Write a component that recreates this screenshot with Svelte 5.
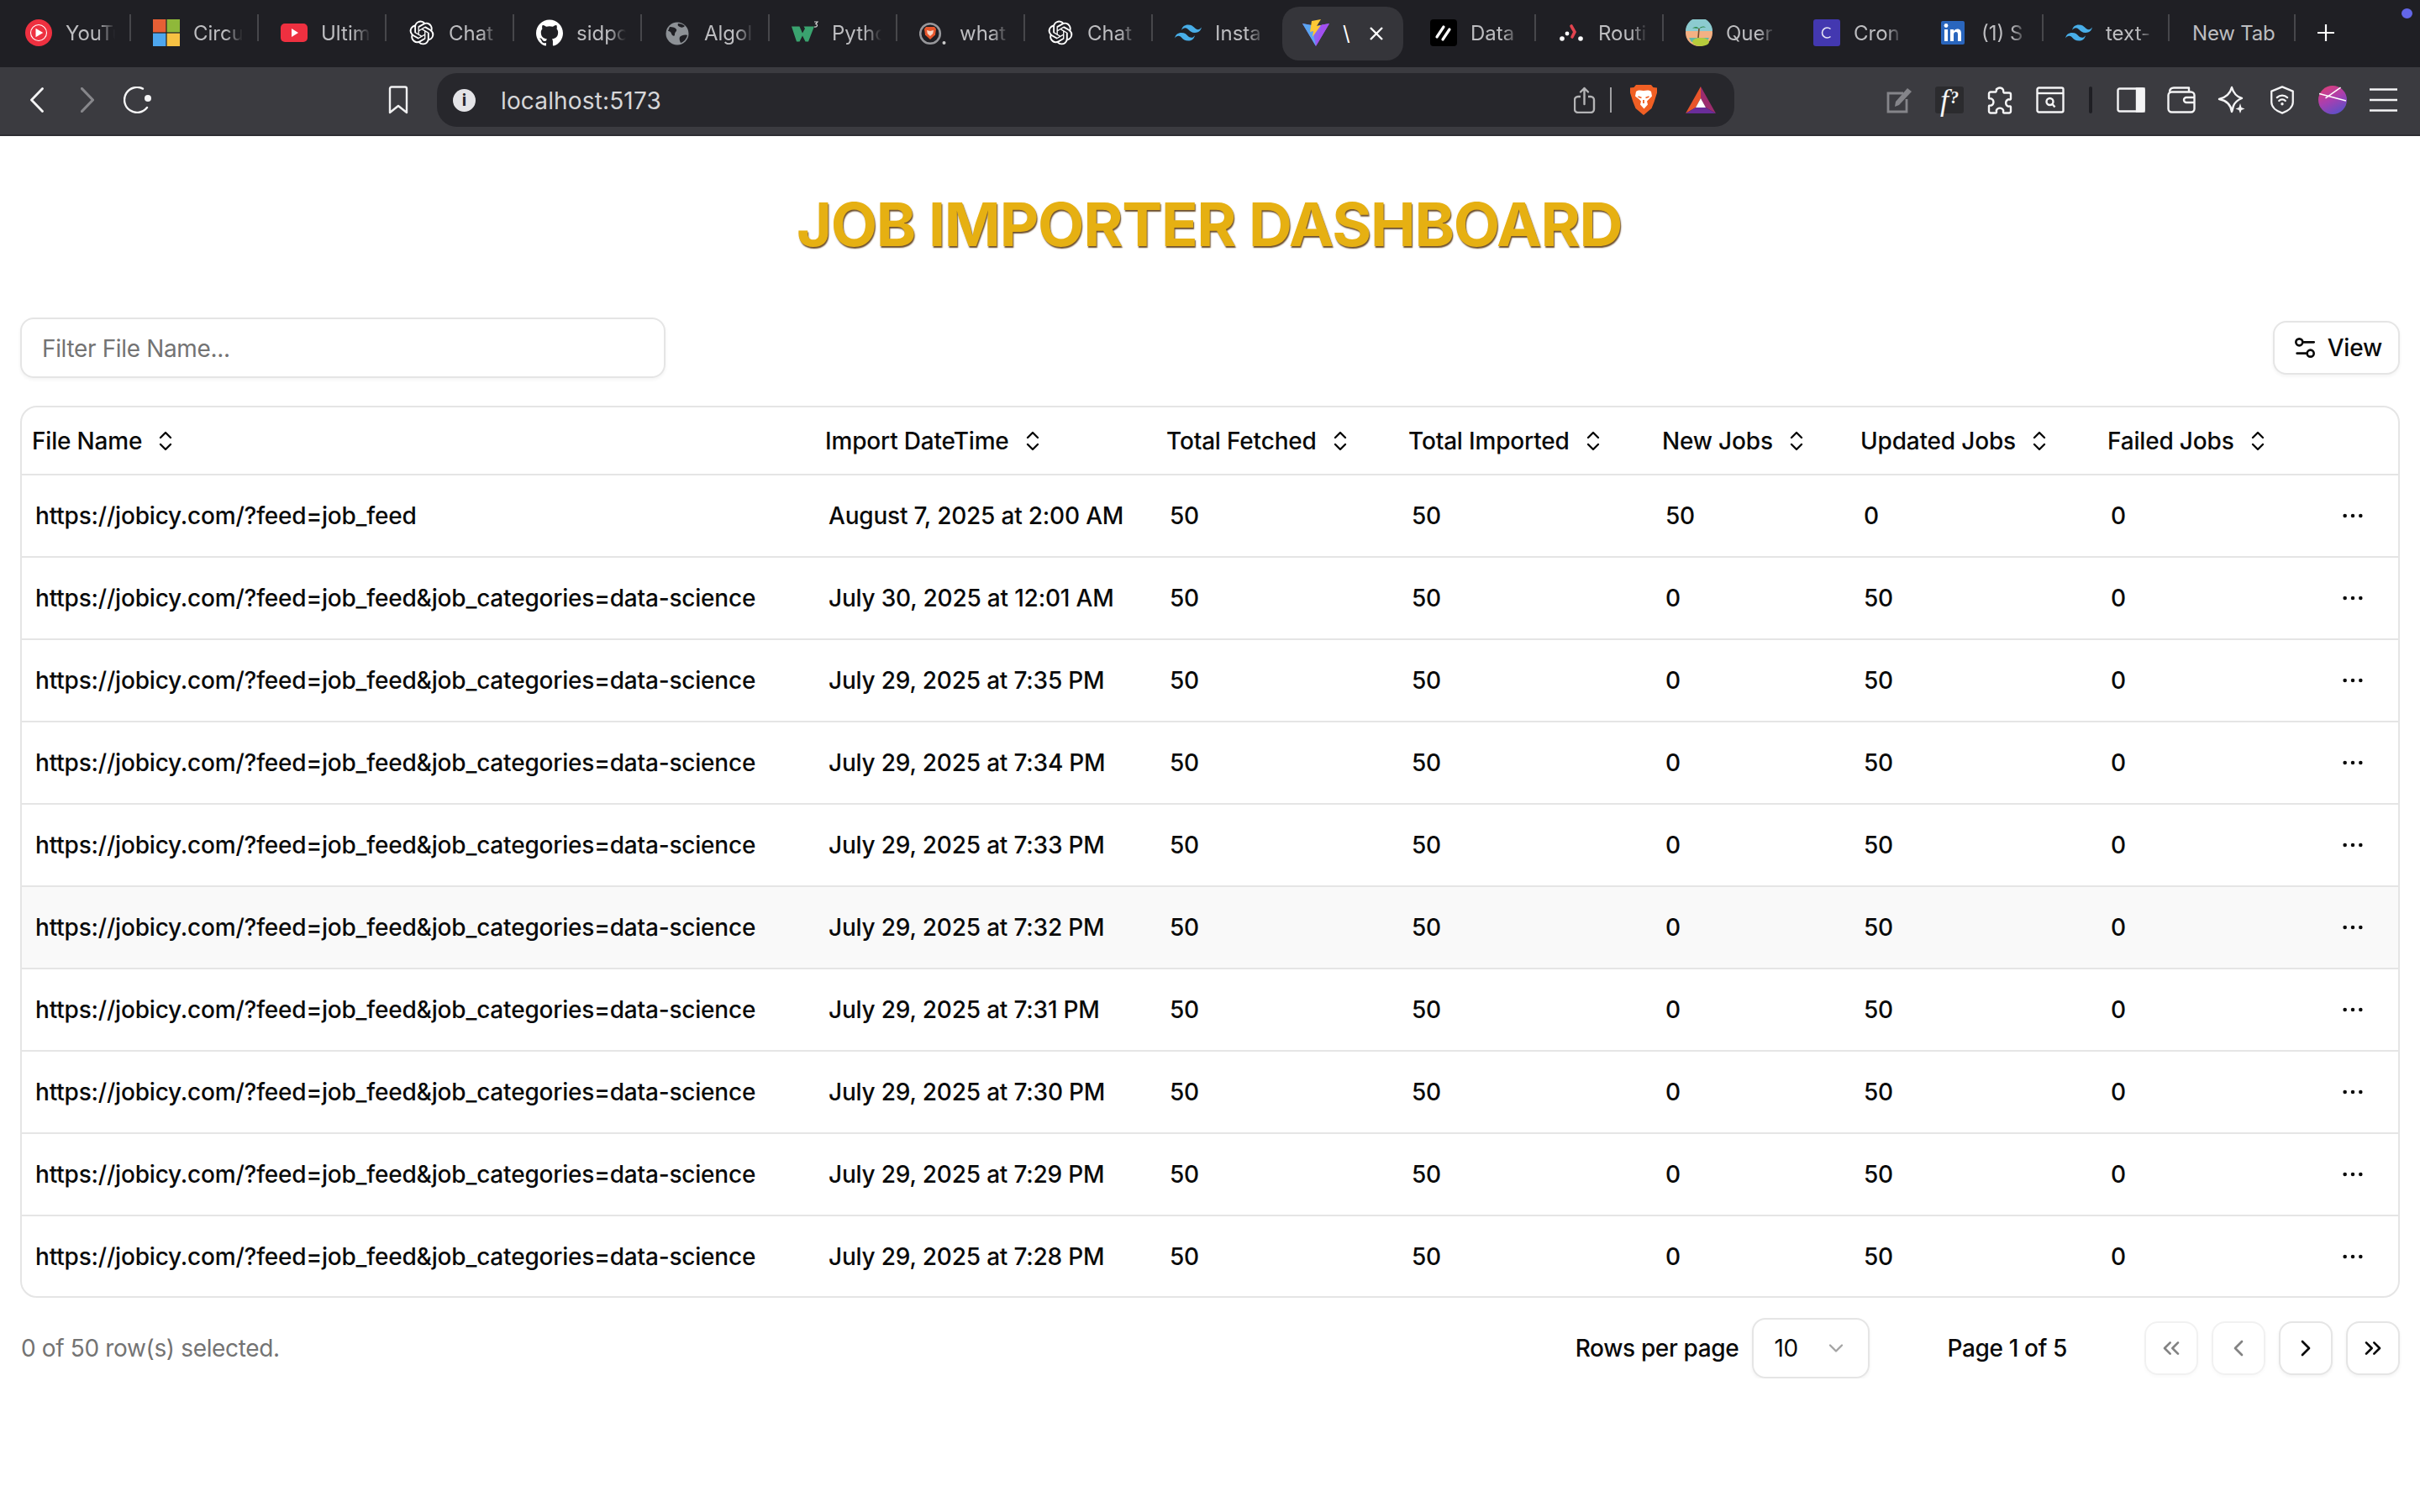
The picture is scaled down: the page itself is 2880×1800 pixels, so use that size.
<script>
  const tabs = [
    { icon: "ytm", label: "YouTu" },
    { icon: "ms", label: "Circu" },
    { icon: "yt", label: "Ultim" },
    { icon: "gpt", label: "Chat" },
    { icon: "gh", label: "sidpc" },
    { icon: "globe", label: "Algol" },
    { icon: "w3", label: "Pytho" },
    { icon: "brave", label: "what" },
    { icon: "gpt", label: "Chat" },
    { icon: "tw", label: "Insta", nosep: true },
    { icon: "vite", label: "\\", active: true },
    { icon: "data", label: "Data" },
    { icon: "route", label: "Routi" },
    { icon: "palm", label: "Quer", nosep: true },
    { icon: "cron", label: "Cron", nosep: true },
    { icon: "in", label: "(1) S", slim: true },
    { icon: "tw", label: "text-", mid: true },
    { icon: "", label: "New Tab", plain: true, mid: true }
  ];

  const columns = ["File Name", "Import DateTime", "Total Fetched", "Total Imported", "New Jobs", "Updated Jobs", "Failed Jobs"];

  const feed = "https://jobicy.com/?feed=job_feed&job_categories=data-science";
  const times = ["July 30, 2025 at 12:01 AM", "July 29, 2025 at 7:35 PM", "July 29, 2025 at 7:34 PM", "July 29, 2025 at 7:33 PM", "July 29, 2025 at 7:32 PM", "July 29, 2025 at 7:31 PM", "July 29, 2025 at 7:30 PM", "July 29, 2025 at 7:29 PM", "July 29, 2025 at 7:28 PM"];

  const rows = [
    { file: "https://jobicy.com/?feed=job_feed", date: "August 7, 2025 at 2:00 AM", fetched: 50, imported: 50, added: 50, updated: 0, failed: 0 },
    ...times.map((date) => ({ file: feed, date, fetched: 50, imported: 50, added: 0, updated: 50, failed: 0 }))
  ];

  const gpt = "M22.2819 9.8211a5.9847 5.9847 0 0 0-.5157-4.9108 6.0462 6.0462 0 0 0-6.5098-2.9A6.0651 6.0651 0 0 0 4.9807 4.1818a5.9847 5.9847 0 0 0-3.9977 2.9 6.0462 6.0462 0 0 0 .7427 7.0966 5.98 5.98 0 0 0 .511 4.9107 6.051 6.051 0 0 0 6.5146 2.9001A5.9847 5.9847 0 0 0 13.2599 24a6.0557 6.0557 0 0 0 5.7718-4.2058 5.9894 5.9894 0 0 0 3.9977-2.9001 6.0557 6.0557 0 0 0-.7475-7.0729zm-9.022 12.6081a4.4755 4.4755 0 0 1-2.8764-1.0408l.1419-.0804 4.7783-2.7582a.7948.7948 0 0 0 .3927-.6813v-6.7369l2.02 1.1686a.071.071 0 0 1 .038.052v5.5826a4.504 4.504 0 0 1-4.4945 4.4944zm-9.6607-4.1254a4.4708 4.4708 0 0 1-.5346-3.0137l.142.0852 4.783 2.7582a.7712.7712 0 0 0 .7806 0l5.8428-3.3685v2.3324a.0804.0804 0 0 1-.0332.0615L9.74 19.9502a4.4992 4.4992 0 0 1-6.1408-1.6464zM2.3408 7.8956a4.485 4.485 0 0 1 2.3655-1.9728V11.6a.7664.7664 0 0 0 .3879.6765l5.8144 3.3543-2.0201 1.1685a.0757.0757 0 0 1-.071 0l-4.8303-2.7865A4.504 4.504 0 0 1 2.3408 7.872zm16.5963 3.8558L13.1038 8.364 15.1192 7.2a.0757.0757 0 0 1 .071 0l4.8303 2.7913a4.4944 4.4944 0 0 1-.6765 8.1042v-5.6772a.79.79 0 0 0-.407-.667zm2.0107-3.0231l-.142-.0852-4.7735-2.7818a.7759.7759 0 0 0-.7854 0L9.409 9.2297V6.8974a.0662.0662 0 0 1 .0284-.0615l4.8303-2.7866a4.4992 4.4992 0 0 1 6.6802 4.66zM8.3065 12.863l-2.02-1.1638a.0804.0804 0 0 1-.038-.0567V6.0742a4.4992 4.4992 0 0 1 7.3757-3.4537l-.142.0805L8.704 5.459a.7948.7948 0 0 0-.3927.6813zm1.0976-2.3654l2.602-1.4998 2.6069 1.4998v2.9994l-2.5974 1.4997-2.6067-1.4997Z";
  const github = "M12 .297c-6.63 0-12 5.373-12 12 0 5.303 3.438 9.8 8.205 11.385.6.113.82-.258.82-.577 0-.285-.01-1.04-.015-2.04-3.338.724-4.042-1.61-4.042-1.61C4.422 18.07 3.633 17.7 3.633 17.7c-1.087-.744.084-.729.084-.729 1.205.084 1.838 1.236 1.838 1.236 1.07 1.835 2.809 1.305 3.495.998.108-.776.417-1.305.76-1.605-2.665-.3-5.466-1.332-5.466-5.93 0-1.31.465-2.38 1.235-3.22-.135-.303-.54-1.523.105-3.176 0 0 1.005-.322 3.3 1.23.96-.267 1.98-.399 3-.405 1.02.006 2.04.138 3 .405 2.28-1.552 3.285-1.23 3.285-1.23.645 1.653.24 2.873.12 3.176.765.84 1.23 1.91 1.23 3.22 0 4.61-2.805 5.625-5.475 5.92.42.36.81 1.096.81 2.22 0 1.606-.015 2.896-.015 3.286 0 .315.21.69.825.57C20.565 22.092 24 17.592 24 12.297c0-6.627-5.373-12-12-12";
  const tailwind = "M12 4.8c-3.2 0-5.2 1.6-6 4.8 1.2-1.6 2.6-2.2 4.2-1.8.91.23 1.57.89 2.29 1.62C13.67 10.62 15.03 12 18 12c3.2 0 5.2-1.6 6-4.8-1.2 1.6-2.6 2.2-4.2 1.8-.91-.23-1.57-.89-2.29-1.62C16.34 6.18 14.98 4.8 12 4.8zM6 12c-3.2 0-5.2 1.6-6 4.8 1.2-1.6 2.6-2.2 4.2-1.8.91.23 1.57.89 2.29 1.62 1.18 1.19 2.54 2.58 5.51 2.58 3.2 0 5.2-1.6 6-4.8-1.2 1.6-2.6 2.2-4.2 1.8-.91-.23-1.57-.89-2.29-1.62C10.34 13.38 8.98 12 6 12z";
</script>

{#snippet favicon(name)}
  <svg class="favicon" viewBox="0 0 32 32" aria-hidden="true">
    {#if name === "ytm"}
      <circle cx="16" cy="16" r="16" fill="#ee3040" />
      <circle cx="16" cy="16" r="9.5" fill="none" stroke="#fff" stroke-width="1.1" />
      <path d="M12.5 10.8v10.4l8.8-5.2z" fill="#fff" />
    {:else if name === "ms"}
      <rect x="0" y="0" width="15.4" height="15.4" fill="#e65f35" />
      <rect x="16.6" y="0" width="15.4" height="15.4" fill="#8fb83a" />
      <rect x="0" y="16.6" width="15.4" height="15.4" fill="#4da6ee" />
      <rect x="16.6" y="16.6" width="15.4" height="15.4" fill="#f6c143" />
    {:else if name === "yt"}
      <rect x="0" y="5" width="32" height="22" rx="5" fill="#ee3040" />
      <path d="M13 11v10l8-5z" fill="#fff" />
    {:else if name === "gpt"}
      <path d={gpt} transform="scale(1.2) translate(1.3 1.3)" fill="#fff" />
    {:else if name === "gh"}
      <path d={github} transform="scale(1.333)" fill="#fff" />
    {:else if name === "globe"}
      <circle cx="16" cy="17" r="13.5" fill="#8d9196" />
      <path d="M7 9c4 0 7 1 8 3s-2 3-2 6-3 2-4-1-3-3-4-3zM19 21c2-2 6-3 9-2-1 4-4 8-8 9-1-2-2-5-1-7zM17 5c3 0 6 1 8 3-2 2-4 2-6 1s-3-2-2-4z" fill="#1f1f24" />
    {:else if name === "w3"}
      <path d="M0 8.5h9.5l3.5 8 3-5.5-1.500-2.500H27l-7 18h-3.500L13 19.500 9.500 26.500H6z" fill="#3aa36f" />
      <path d="M27 3h4l-2.200 2.500c2.500.3 2.500 4-1.800 3.500" fill="none" stroke="#d5d5d5" stroke-width="1.2" />
    {:else if name === "brave"}
      <circle cx="13" cy="17" r="11.800" fill="none" stroke="#97979b" stroke-width="2.6" />
      <path d="M8 9h10l2 2.500-1 7-6 5.500-6-5.500-1-7z" fill="#e7562c" />
      <path d="M9 13l4 1 4-1-.8 4-3.200 3-3.200-3z" fill="#f9d8c8" />
      <circle cx="29.5" cy="28" r="2" fill="#ccc" />
    {:else if name === "tw"}
      <path d={tailwind} transform="scale(1.333)" fill="#48aee8" />
    {:else if name === "vite"}
      <path d="M0 5l16 3 16-3-16 27z" fill="#8f62f2" />
      <path d="M0 5l11 2 5 25z" fill="#5aa6f2" />
      <path d="M16 32l16-27-9 1.600z" fill="#a24ff0" />
      <path d="M22 0l-11 2-2 13 4-1-1 7 10-14-5 1z" fill="#fdc835" />
    {:else if name === "data"}
      <rect width="32" height="32" rx="4" fill="#000" />
      <path d="M8 21L16 9M15 24l8-12" stroke="#fff" stroke-width="3.2" stroke-linecap="round" />
    {:else if name === "route"}
      <path d="M16 8l4 7-3 6" fill="none" stroke="#e2434e" stroke-width="3.6" stroke-linecap="round" />
      <circle cx="5" cy="23" r="2.8" fill="#fff" />
      <circle cx="27" cy="23" r="2.8" fill="#fff" />
      <circle cx="11" cy="17" r="2.4" fill="#fff" />
    {:else if name === "palm"}
      <ellipse cx="16" cy="16" rx="16" ry="16" fill="#f4b183" />
      <path d="M0 14a16 16 0 0 1 32 0z" fill="#8ccbd0" />
      <path d="M4 22h24l-3 5H7z" fill="#5fb8a6" />
      <ellipse cx="18" cy="27" rx="10" ry="5" fill="#b6cc3c" />
      <path d="M15 22l1-11" stroke="#6f4a2a" stroke-width="1.6" />
      <path d="M16 11c-3-3-6-2-8 0 3-1 5 0 8 0 3-3 6-3 8-1-3-1-5 0-8 1z" fill="#2f8a4a" />
    {:else if name === "cron"}
      <rect width="32" height="32" rx="3" fill="#4338b0" />
      <path d="M20.5 11.5a6 6 0 1 0 0 9" fill="none" stroke="#e6e6f5" stroke-width="1.6" />
    {:else if name === "in"}
      <rect x="0" y="2" width="28" height="28" rx="2" fill="#2a66bd" />
      <rect x="4" y="12" width="4" height="14" fill="#fff" />
      <circle cx="6" cy="7.5" r="2.4" fill="#fff" />
      <path d="M11 12h4v2c1-1.500 2.500-2.400 4.400-2.400 3.400 0 4.600 2.200 4.600 5.400v9h-4v-8c0-2-.6-3-2.200-3s-2.800 1.200-2.800 3v8h-4z" fill="#fff" />
    {/if}
  </svg>
{/snippet}

{#snippet sortIcon()}
  <svg class="sort" viewBox="0 0 16 24" fill="none" stroke="currentColor" stroke-width="2.4" stroke-linecap="round" stroke-linejoin="round" aria-hidden="true">
    <path d="M2 8l6-6 6 6" />
    <path d="M2 16l6 6 6-6" />
  </svg>
{/snippet}

<div class="chrome">
  <div class="tabstrip">
    {#each tabs as tab}
      <div class="tab" class:active={tab.active} class:plain={tab.plain} class:nosep={tab.nosep} class:slim={tab.slim} class:mid={tab.mid}>
        {#if tab.icon}{@render favicon(tab.icon)}{/if}
        <span class="tab-title" class:short={tab.active}>{tab.label}</span>
        {#if tab.active}
          <svg class="tab-close" viewBox="0 0 16 16" fill="none" stroke="#fff" stroke-width="2.4" aria-hidden="true"><path d="M1 1l14 14M15 1L1 15" /></svg>
        {/if}
      </div>
    {/each}
    <svg class="new-tab" viewBox="0 0 20 20" stroke="#fff" stroke-width="2.2" aria-hidden="true"><path d="M10 0v20M0 10h20" /></svg>
    <span class="profile-dot"></span>
  </div>

  <div class="toolbar">
    <div class="nav">
      <svg class="ic back" viewBox="0 0 16 30" fill="none" stroke="#f4f4f5" stroke-width="2.8" stroke-linecap="round" stroke-linejoin="round"><path d="M14.5 1.5L1.5 15l13 13.500" /></svg>
      <svg class="ic forward" viewBox="0 0 16 30" fill="none" stroke="#87878b" stroke-width="3.2" stroke-linecap="round" stroke-linejoin="round"><path d="M1.5 1.5L14.5 15l-13 13.500" /></svg>
      <svg class="ic reload" viewBox="0 0 34 32" fill="none" stroke="#f4f4f5" stroke-width="2.4" stroke-linecap="round"><path d="M23 2.600A15 15 0 1 0 28 25" /><circle cx="29" cy="14" r="4" fill="#f4f4f5" stroke="none" /></svg>
    </div>
    <svg class="ic bookmark" viewBox="0 0 24 34" fill="none" stroke="#f0f0f1" stroke-width="2.4" stroke-linejoin="round"><path d="M2 3.500a2 2 0 0 1 2-2h16a2 2 0 0 1 2 2V32l-10-8-10 8z" /></svg>
    <div class="address">
      <span class="info">i</span>
      <span class="url">localhost:5173</span>
      <div class="address-end">
        <svg class="ic share" viewBox="0 0 26 32" fill="none" stroke="#b4b4b6" stroke-width="2.4" stroke-linejoin="round"><path d="M8 12H5a4 4 0 0 0-4 4v11a4 4 0 0 0 4 4h15a4 4 0 0 0 4-4V16a4 4 0 0 0-4-4h-3" /><path d="M12.5 21V2M8 6.500L12.500 2 17 6.500" stroke-linecap="round" /></svg>
        <span class="address-sep"></span>
        <svg class="ic lion" viewBox="0 0 32 36"><path d="M7 0h18l2.500 3 4.500.5v6l-3.500 11-3 7.500-9.500 8-9.500-8-3-7.500L0 9.500v-6L4.500 3z" fill="#f05f24" /><path d="M7 8c3-2.500 6-1.500 9-1 3-.5 6-1.500 9 1l1 5.500-3.500 3.500-2.500 2.500 1 4-4.500 5-4.500-5 1-4-2.500-2.500L6 13.500z" fill="#fff" /><path d="M9.500 14l4 1.500M22.500 14l-4 1.500M16 18v4" stroke="#f05f24" stroke-width="1.8" /></svg>
        <svg class="ic bat" viewBox="0 0 36 32"><path d="M18 0L0 32l12-7 6-11z" fill="#e9552b" /><path d="M18 0l18 32-12-7-6-11z" fill="#9c2c6e" /><path d="M0 32l12-7h12l12 7z" fill="#6a2d9a" /><path d="M18 14l-6 11h12z" fill="#fff" /></svg>
      </div>
    </div>
    <div class="extensions">
      <svg class="ic ext" viewBox="0 0 34 34" fill="none" stroke="#85858a" stroke-width="2.8"><path d="M22 9H4v22h22V16" /><path d="M12 25l1-6L27 3l5 4-15 16z" fill="#85858a" stroke="none" /></svg>
      <div class="fx"><em>f</em><b>?</b></div>
      <svg class="ic ext" viewBox="0 0 34 34" fill="none" stroke="#f4f4f5" stroke-width="2.4" stroke-linejoin="round"><path d="M13 5a4.500 4.500 0 0 1 8 0c.5 1.500-.5 3 1 3.500h6a2 2 0 0 1 2 2v5c0 1.500-1.500 1-3 .8a4.500 4.500 0 0 0 0 8.400c1.500-.2 3-.7 3 .8v5a2 2 0 0 1-2 2h-6c-1.500 0-1-1.500-.8-3a4.500 4.500 0 0 0-8.400 0c.2 1.500.7 3-.8 3H6a2 2 0 0 1-2-2v-6c0-1.500 1.500-.5 3-1a4.500 4.500 0 0 0 0-8c-1.500-.5-3 .5-3-1v-5a2 2 0 0 1 2-2h6c1.500-.5.500-2 1-3.500z" /></svg>
      <svg class="ic ext" viewBox="0 0 34 32" fill="none" stroke="#f4f4f5" stroke-width="2.4"><rect x="1.5" y="1.5" width="31" height="29" rx="2" /><path d="M1.5 8h31" /><circle cx="16.5" cy="18" r="4" /><path d="M19.5 21l3 3.500" /></svg>
      <span class="tool-sep"></span>
      <svg class="ic ext" viewBox="0 0 34 30" fill="none" stroke="#f4f4f5" stroke-width="2.4"><rect x="1.5" y="1.5" width="31" height="27" rx="2" /><rect x="24" y="1.5" width="8.5" height="27" fill="#f4f4f5" /></svg>
      <svg class="ic ext" viewBox="0 0 34 32" fill="none" stroke="#f4f4f5" stroke-width="2.4" stroke-linejoin="round"><path d="M3 6.500C3 3 5 1.500 8 1.500h18v5" /><rect x="1.5" y="6.5" width="31" height="24" rx="4" /><path d="M32 13h-9a3 3 0 0 0-3 3v0a3 3 0 0 0 3 3h9" /></svg>
      <svg class="ic ext" viewBox="0 0 34 34" fill="none" stroke="#f4f4f5" stroke-width="2.4" stroke-linejoin="round"><path d="M17 2c2 7 5 11 12 13-5 2-8 4-10 9-1 3-1 5-2 7-1-8-5-13-15-15 8-2 13-6 15-14z" /><path d="M27 21l1.500 5 4 1.500-4 1.500-1.500 4-1.500-4-4-1.500 4-1.500z" fill="#f4f4f5" stroke="none" /></svg>
      <svg class="ic ext" viewBox="0 0 30 36" fill="none" stroke="#f4f4f5" stroke-width="2.4" stroke-linejoin="round"><path d="M15 1.500L28.500 7v14c0 6-6 11-13.500 13.500C7.500 32 1.500 27 1.500 21V7z" /><path d="M8.500 15a9.500 9.500 0 0 1 13 0M11 19a5.500 5.500 0 0 1 8 0" stroke-linecap="round" /><circle cx="15" cy="23" r="1.8" fill="#f4f4f5" stroke="none" /></svg>
      <svg class="ic ext" viewBox="0 0 32 32"><defs><linearGradient id="orb" x1="0.2" y1="0" x2="0.7" y2="1"><stop offset="0" stop-color="#dd3f78" /><stop offset="0.5" stop-color="#a83fb0" /><stop offset="1" stop-color="#5a50c8" /></linearGradient></defs><circle cx="16" cy="16" r="16" fill="url(#orb)" /><path d="M1 9l30 8M8 14L25 2" stroke="#fff" stroke-width="1.4" /></svg>
      <svg class="ic ext" viewBox="0 0 34 28" stroke="#f4f4f5" stroke-width="2.6"><path d="M1 1.500h33M1 14h33M1 26.500h33" /></svg>
    </div>
  </div>
</div>

<main class="page">
  <h1 class="title">JOB IMPORTER DASHBOARD</h1>

  <div class="controls">
    <div class="filter">Filter File Name...</div>
    <button class="view-btn">
      <svg class="lucide" viewBox="0 0 24 24" fill="none" stroke="currentColor" stroke-width="2" stroke-linecap="round" stroke-linejoin="round"><path d="M20 7h-9" /><path d="M14 17H5" /><circle cx="17" cy="17" r="3" /><circle cx="7" cy="7" r="3" /></svg>
      View
    </button>
  </div>

  <div class="table-wrap">
    <table>
      <colgroup>
        <col class="c-file" /><col class="c-date" /><col class="c-fetched" /><col class="c-imported" /><col class="c-new" /><col class="c-updated" /><col class="c-failed" /><col />
      </colgroup>
      <thead>
        <tr>
          {#each columns as col}
            <th><span class="th-inner">{col}{@render sortIcon()}</span></th>
          {/each}
          <th></th>
        </tr>
      </thead>
      <tbody>
        {#each rows as row, i}
          <tr class:hover={i === 5}>
            <td>{row.file}</td>
            <td>{row.date}</td>
            <td>{row.fetched}</td>
            <td>{row.imported}</td>
            <td>{row.added}</td>
            <td>{row.updated}</td>
            <td>{row.failed}</td>
            <td class="actions">
              <svg class="lucide" viewBox="0 0 24 24" fill="currentColor"><circle cx="12" cy="12" r="1.7" /><circle cx="19" cy="12" r="1.7" /><circle cx="5" cy="12" r="1.7" /></svg>
            </td>
          </tr>
        {/each}
      </tbody>
    </table>
  </div>

  <div class="footer">
    <span class="selected">0 of 50 row(s) selected.</span>
    <div class="pager">
      <span class="rows-label">Rows per page</span>
      <div class="select">
        10
        <svg class="chev" viewBox="0 0 24 24" fill="none" stroke="#a3a3a3" stroke-width="2" stroke-linecap="round" stroke-linejoin="round"><path d="M6 9l6 6 6-6" /></svg>
      </div>
      <span class="page-label">Page 1 of 5</span>
      <div class="page-btns">
        <button class="page-btn" disabled><svg class="chev" viewBox="0 0 24 24" fill="none" stroke="currentColor" stroke-width="2" stroke-linecap="round" stroke-linejoin="round"><path d="M11 17l-5-5 5-5" /><path d="M18 17l-5-5 5-5" /></svg></button>
        <button class="page-btn" disabled><svg class="chev" viewBox="0 0 24 24" fill="none" stroke="currentColor" stroke-width="2" stroke-linecap="round" stroke-linejoin="round"><path d="M15 18l-6-6 6-6" /></svg></button>
        <button class="page-btn"><svg class="chev" viewBox="0 0 24 24" fill="none" stroke="currentColor" stroke-width="2" stroke-linecap="round" stroke-linejoin="round"><path d="M9 18l6-6-6-6" /></svg></button>
        <button class="page-btn"><svg class="chev" viewBox="0 0 24 24" fill="none" stroke="currentColor" stroke-width="2" stroke-linecap="round" stroke-linejoin="round"><path d="M6 17l5-5-5-5" /><path d="M13 17l5-5-5-5" /></svg></button>
      </div>
    </div>
  </div>
</main>

<style>
  :global(body) {
    margin: 0;
    background: #fff;
    font-family: Inter, "Liberation Sans", sans-serif;
    color: #0a0a0a;
  }

  /* BROWSER CHROME */
  .chrome {
    height: 162px;
    display: flex;
    flex-direction: column;
  }
  .tabstrip {
    height: 80px;
    background: #1f1f24;
    display: flex;
    align-items: center;
    padding-left: 3px;
    position: relative;
  }
  .tab {
    width: 152px;
    height: 64px;
    box-sizing: border-box;
    padding-left: 27px;
    padding-right: 18px;
    display: flex;
    align-items: center;
    gap: 16px;
    position: relative;
    flex-shrink: 0;
  }
  .tab.slim {
    width: 148px;
  }
  .tab.mid {
    width: 150px;
  }
  .tab::after {
    content: "";
    position: absolute;
    right: -1px;
    top: 9px;
    width: 2px;
    height: 32px;
    background: #47474b;
  }
  .tab.nosep::after,
  .tab.active::after {
    display: none;
  }
  .tab.active {
    width: 144px;
    margin: 0 5px 0 3px;
    background: #35353a;
    border-radius: 20px;
    padding-left: 24px;
    padding-right: 24px;
  }
  .tab.plain {
    padding-left: 28px;
    padding-right: 0;
  }
  .favicon {
    width: 32px;
    height: 32px;
    flex-shrink: 0;
    margin-bottom: 2px;
  }
  .tab-title {
    font-size: 24px;
    color: #bdbdc0;
    white-space: nowrap;
    overflow: hidden;
    flex: 1;
    -webkit-mask-image: linear-gradient(to right, #000 65%, transparent 100%);
    mask-image: linear-gradient(to right, #000 65%, transparent 100%);
    margin-bottom: 2px;
  }
  .tab.plain .tab-title {
    letter-spacing: -0.2px;
    -webkit-mask-image: none;
    mask-image: none;
  }
  .tab-title.short {
    color: #fff;
    -webkit-mask-image: none;
    mask-image: none;
  }
  .tab-close {
    width: 16px;
    height: 16px;
    flex-shrink: 0;
  }
  .new-tab {
    width: 20px;
    height: 20px;
    margin-left: 27px;
    margin-bottom: 2px;
  }
  .profile-dot {
    position: absolute;
    right: 9px;
    top: 10px;
    width: 13px;
    height: 12px;
    border-radius: 50%;
    background: #6366e8;
  }

  .toolbar {
    height: 82px;
    box-sizing: border-box;
    background: #3b3b40;
    border-bottom: 2px solid #2e2e33;
    display: flex;
    align-items: center;
    padding: 0 27px 2px 36px;
  }
  .ic {
    display: block;
    flex-shrink: 0;
  }
  .nav {
    display: flex;
    align-items: center;
  }
  .back, .forward {
    width: 16px;
    height: 30px;
  }
  .forward {
    margin-left: 44px;
  }
  .reload {
    width: 34px;
    height: 32px;
    margin-left: 35px;
  }
  .bookmark {
    width: 24px;
    height: 34px;
    margin-left: 281px;
  }
  .address {
    width: 1544px;
    height: 64px;
    box-sizing: border-box;
    margin-left: 34px;
    padding: 0 22px 0 19px;
    border-radius: 24px;
    background: #27272c;
    display: flex;
    align-items: center;
  }
  .info {
    width: 27px;
    height: 27px;
    border-radius: 50%;
    background: #e4e4e8;
    color: #27272c;
    font-size: 20px;
    font-weight: 700;
    line-height: 27px;
    text-align: center;
  }
  .url {
    margin-left: 30px;
    padding-top: 1px;
    font-size: 28px;
    letter-spacing: 0.15px;
    color: #d6d6d8;
  }
  .address-end {
    margin-left: auto;
    display: flex;
    align-items: center;
  }
  .share {
    width: 26px;
    height: 32px;
  }
  .address-sep {
    width: 2px;
    height: 30px;
    background: #a0a0a3;
    margin: 0 22px 0 17px;
  }
  .lion {
    width: 32px;
    height: 36px;
  }
  .bat {
    width: 36px;
    height: 32px;
    margin-left: 34px;
  }
  .extensions {
    margin-left: auto;
    display: flex;
    align-items: center;
    gap: 26px;
  }
  .extensions .ext {
    width: 34px;
    height: 34px;
  }
  .fx {
    width: 34px;
    height: 32px;
    border-radius: 3px;
    background: #2b2b2e;
    display: flex;
    align-items: center;
    justify-content: center;
    color: #f4f4f5;
    font-family: "Liberation Serif", serif;
  }
  .fx em {
    font-size: 36px;
    line-height: 1;
  }
  .fx b {
    font-size: 20px;
    line-height: 1;
    font-style: italic;
    margin-left: 2px;
    margin-bottom: 6px;
  }
  .tool-sep {
    width: 4px;
    height: 32px;
    margin: 0 3px;
    background: #1f1f24;
    border-radius: 2px;
  }

  /* PAGE */
  .page {
    padding: 0 24px;
  }
  .title {
    margin: 0;
    padding: 65px 2px 0 0;
    height: 151px;
    font-size: 72px;
    line-height: 80px;
    font-weight: 700;
    letter-spacing: -1.3px;
    text-align: center;
    color: #e6b012;
    text-shadow: 1px 2px 1.5px rgba(84, 48, 8, 0.85);
  }
  .controls {
    display: flex;
    align-items: center;
    justify-content: space-between;
    height: 72px;
    margin-bottom: 33px;
  }
  .filter {
    width: 768px;
    height: 72px;
    box-sizing: border-box;
    border: 2px solid #e5e5e5;
    border-radius: 16px;
    box-shadow: 0 2px 4px rgba(0, 0, 0, 0.05);
    display: flex;
    align-items: center;
    padding: 2px 0 0 24px;
    font-size: 28px;
    letter-spacing: -0.35px;
    color: #737373;
  }
  .view-btn {
    height: 64px;
    padding: 0 19px 0 20px;
    display: flex;
    align-items: center;
    gap: 11px;
    background: #fff;
    border: 2px solid #e5e5e5;
    border-radius: 16px;
    box-shadow: 0 2px 4px rgba(0, 0, 0, 0.05);
    font-family: inherit;
    font-size: 28px;
    font-weight: 500;
    letter-spacing: -0.2px;
    color: #0a0a0a;
  }
  .lucide {
    width: 32px;
    height: 32px;
    display: block;
  }

  /* TABLE */
  .table-wrap {
    border: 2px solid #e5e5e5;
    border-radius: 20px;
    overflow: hidden;
  }
  table {
    width: 100%;
    table-layout: fixed;
    border-collapse: collapse;
    font-size: 28px;
  }
  .c-file { width: 944px; }
  .c-date { width: 406px; }
  .c-fetched { width: 288px; }
  .c-imported { width: 302px; }
  .c-new { width: 236px; }
  .c-updated { width: 294px; }
  .c-failed { width: 260px; }
  thead tr {
    height: 80px;
    border-bottom: 2px solid #e5e5e5;
  }
  th {
    padding: 0 0 0 12px;
    text-align: left;
    font-weight: 500;
    letter-spacing: -0.18px;
  }
  .th-inner {
    display: inline-flex;
    align-items: center;
    gap: 20px;
  }
  .sort {
    width: 16px;
    height: 24px;
  }
  tbody tr {
    height: 98px;
    border-bottom: 2px solid #e5e5e5;
  }
  tbody tr:last-child {
    height: 96px;
    border-bottom: 0;
  }
  tbody tr.hover {
    background: #f9f9f9;
  }
  td {
    padding: 0 0 0 16px;
    font-weight: 500;
    letter-spacing: -0.2px;
    white-space: nowrap;
  }
  .actions .lucide {
    margin-left: 12px;
  }

  /* FOOTER */
  .footer {
    display: flex;
    align-items: center;
    justify-content: space-between;
    height: 72px;
    margin-top: 24px;
    font-size: 28px;
  }
  .selected {
    color: #737373;
    letter-spacing: -0.35px;
    padding-left: 1px;
  }
  .pager {
    display: flex;
    align-items: center;
    font-weight: 500;
    letter-spacing: -0.35px;
  }
  .select {
    width: 140px;
    height: 72px;
    box-sizing: border-box;
    margin-left: 16px;
    padding: 0 24px 0 24px;
    border: 2px solid #e5e5e5;
    border-radius: 16px;
    box-shadow: 0 2px 4px rgba(0, 0, 0, 0.05);
    display: flex;
    align-items: center;
    justify-content: space-between;
    font-weight: 400;
  }
  .chev {
    width: 32px;
    height: 32px;
    display: block;
  }
  .select .chev {
    width: 28px;
    height: 28px;
  }
  .page-label {
    margin-left: 92px;
    margin-right: 92px;
  }
  .page-btns {
    display: flex;
    gap: 16px;
  }
  .page-btn {
    width: 64px;
    height: 64px;
    padding: 0;
    display: flex;
    align-items: center;
    justify-content: center;
    background: #fff;
    border: 2px solid #e5e5e5;
    border-radius: 16px;
    box-shadow: 0 2px 4px rgba(0, 0, 0, 0.05);
    color: #0a0a0a;
  }
  .page-btn:disabled {
    opacity: 0.5;
  }
</style>
